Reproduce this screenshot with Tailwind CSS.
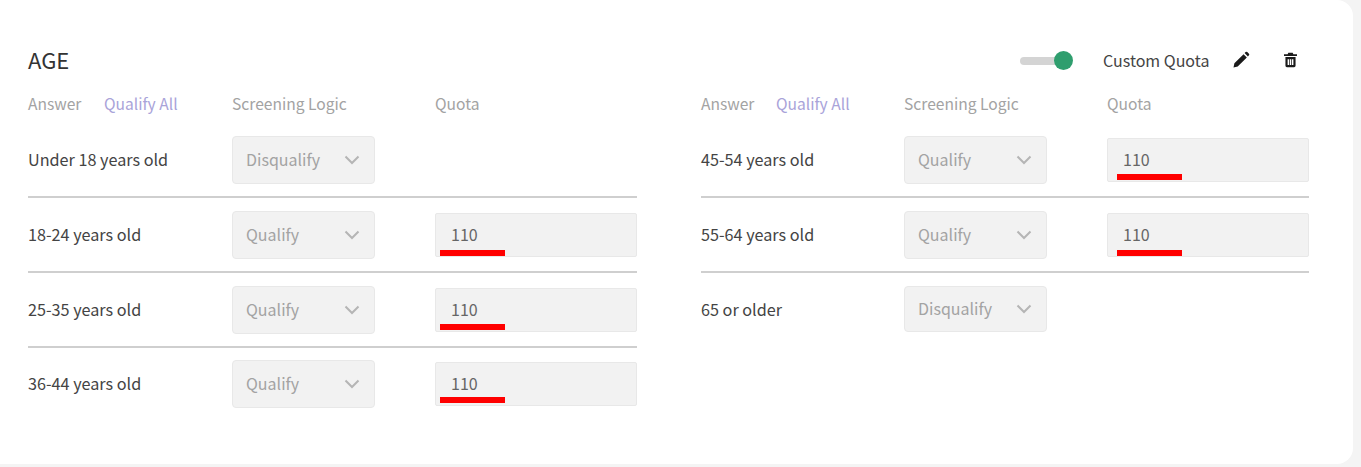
<!DOCTYPE html>
<html lang="en">

<head>
    <meta charset="UTF-8">
    <meta name="viewport" content="width=device-width, initial-scale=1.0">
    <script src="https://cdn.jsdelivr.net/npm/@tailwindcss/browser@4"></script>
    <title>Age quota</title>
</head>

<body class="bg-[#f4f4f4] font-['Noto_Sans_CJK_SC',sans-serif] overflow-hidden">
    <div class="bg-white w-[1353px] h-[464px] rounded-br-[16px] rounded-tr-[16px] pl-[28px] pr-[44px] pt-[47px]">
        <!-- Header -->
        <div class="flex items-center h-[28px]">
            <h2 class="text-[22px] text-[#333] leading-[28px] mb-[4px]">AGE</h2>
            <div class="ml-auto flex items-center">
                <div class="relative w-[50px] h-[8px] rounded-full bg-[#d4d4d4]">
                    <span class="absolute right-[-3px] top-[-6px] w-[19px] h-[19px] rounded-full bg-[#2f9e6e]"></span>
                </div>
                <span class="ml-[33px] mb-[3px] text-[16px] leading-[20px] text-[#444] w-[107px] whitespace-nowrap">Custom Quota</span>
                <svg class="ml-[22px] mb-[3px] w-[18px] h-[18px]" viewBox="0 0 24 24" fill="#1a1a1a"><path d="M2 22l1.2-5.6L15.4 4.2l4.4 4.4L7.6 20.8 2 22zM16.8 2.8l1.4-1.4a1.5 1.5 0 0 1 2.1 0l2.3 2.3a1.5 1.5 0 0 1 0 2.1l-1.4 1.4-4.4-4.4z"/></svg>
                <svg class="ml-[34px] mb-[3px] w-[13px] h-[16px]" viewBox="3 2 18 20" fill="#1a1a1a"><path d="M9 2h6l1 2h5v2.5H3V4h5l1-2zM5 8h14v12a2 2 0 0 1-2 2H7a2 2 0 0 1-2-2V8zm3 3v8h2v-8H8zm3 0v8h2v-8h-2zm3 0v8h2v-8h-2z"/></svg>
                <span class="w-[12px]"></span>
            </div>
        </div>

        <div class="grid grid-cols-[609px_608px] gap-x-[64px] mt-[19px]">
            <!-- Left column -->
            <div>
                <div class="flex items-center h-[20px] text-[15.6px] text-[#a3a3a3]">
                    <span class="w-[76px]">Answer</span>
                    <span class="w-[128px] text-[#a9a3d9]">Qualify All</span>
                    <span class="w-[203px]">Screening Logic</span>
                    <span>Quota</span>
                </div>
                <div class="mt-[9px]">
                    <div class="flex items-center h-[75px] border-b-2 border-[#cfcfcf]">
                        <span class="w-[204px] text-[16.2px] text-[#444]">Under 18 years old</span>
                        <div class="w-[143px] h-[48px] bg-[#f2f2f2] border border-[#e8e8e8] rounded-[4px] flex items-center justify-between pl-[13px] pr-[14px] text-[16px] text-[#a3a3a3]"><span class="mb-[2px]">Disqualify</span><svg class="w-[16px] h-[10px]" viewBox="0 0 16 10" fill="none" stroke="#b5b5b5" stroke-width="2"><path d="M1.5 1.5 8 8l6.5-6.5"/></svg></div>
                    </div>
                    <div class="flex items-center h-[75px] border-b-2 border-[#cfcfcf]">
                        <span class="w-[204px] text-[16.2px] text-[#444]">18-24 years old</span>
                        <div class="w-[143px] h-[48px] bg-[#f2f2f2] border border-[#e8e8e8] rounded-[4px] flex items-center justify-between pl-[13px] pr-[14px] text-[16px] text-[#a3a3a3]"><span class="mb-[2px]">Qualify</span><svg class="w-[16px] h-[10px]" viewBox="0 0 16 10" fill="none" stroke="#b5b5b5" stroke-width="2"><path d="M1.5 1.5 8 8l6.5-6.5"/></svg></div>
                        <div class="relative ml-[60px] w-[202px] h-[44px] bg-[#f2f2f2] border border-[#e8e8e8] rounded-[2px] flex items-center pl-[15px] text-[16px] text-[#666]"><span class="mb-[2px]">110</span><span class="absolute left-[4px] top-[36px] w-[65px] h-[6px] bg-[#ff0000]"></span></div>
                    </div>
                    <div class="flex items-center h-[75px] border-b-2 border-[#cfcfcf]">
                        <span class="w-[204px] text-[16.2px] text-[#444]">25-35 years old</span>
                        <div class="w-[143px] h-[48px] bg-[#f2f2f2] border border-[#e8e8e8] rounded-[4px] flex items-center justify-between pl-[13px] pr-[14px] text-[16px] text-[#a3a3a3]"><span class="mb-[2px]">Qualify</span><svg class="w-[16px] h-[10px]" viewBox="0 0 16 10" fill="none" stroke="#b5b5b5" stroke-width="2"><path d="M1.5 1.5 8 8l6.5-6.5"/></svg></div>
                        <div class="relative ml-[60px] w-[202px] h-[44px] bg-[#f2f2f2] border border-[#e8e8e8] rounded-[2px] flex items-center pl-[15px] text-[16px] text-[#666]"><span class="mb-[2px]">110</span><span class="absolute left-[4px] top-[35px] w-[65px] h-[6px] bg-[#ff0000]"></span></div>
                    </div>
                    <div class="flex items-center h-[72px]">
                        <span class="w-[204px] mb-[2px] text-[16.2px] text-[#444]">36-44 years old</span>
                        <div class="w-[143px] h-[48px] bg-[#f2f2f2] border border-[#e8e8e8] rounded-[4px] flex items-center justify-between pl-[13px] pr-[14px] text-[16px] text-[#a3a3a3]"><span class="mb-[2px]">Qualify</span><svg class="w-[16px] h-[10px]" viewBox="0 0 16 10" fill="none" stroke="#b5b5b5" stroke-width="2"><path d="M1.5 1.5 8 8l6.5-6.5"/></svg></div>
                        <div class="relative ml-[60px] w-[202px] h-[44px] bg-[#f2f2f2] border border-[#e8e8e8] rounded-[2px] flex items-center pl-[15px] text-[16px] text-[#666]"><span class="mb-[2px]">110</span><span class="absolute left-[4px] top-[34px] w-[65px] h-[6px] bg-[#ff0000]"></span></div>
                    </div>
                </div>
            </div>

            <!-- Right column -->
            <div>
                <div class="flex items-center h-[20px] text-[15.6px] text-[#a3a3a3]">
                    <span class="w-[75px]">Answer</span>
                    <span class="w-[128px] text-[#a9a3d9]">Qualify All</span>
                    <span class="w-[203px]">Screening Logic</span>
                    <span>Quota</span>
                </div>
                <div class="mt-[9px]">
                    <div class="flex items-center h-[75px] border-b-2 border-[#cfcfcf]">
                        <span class="w-[203px] text-[16.2px] text-[#444]">45-54 years old</span>
                        <div class="w-[143px] h-[48px] bg-[#f2f2f2] border border-[#e8e8e8] rounded-[4px] flex items-center justify-between pl-[13px] pr-[14px] text-[16px] text-[#a3a3a3]"><span class="mb-[2px]">Qualify</span><svg class="w-[16px] h-[10px]" viewBox="0 0 16 10" fill="none" stroke="#b5b5b5" stroke-width="2"><path d="M1.5 1.5 8 8l6.5-6.5"/></svg></div>
                        <div class="relative ml-[60px] w-[202px] h-[44px] bg-[#f2f2f2] border border-[#e8e8e8] rounded-[2px] flex items-center pl-[15px] text-[16px] text-[#666]"><span class="mb-[2px]">110</span><span class="absolute left-[9px] top-[35px] w-[65px] h-[6px] bg-[#ff0000]"></span></div>
                    </div>
                    <div class="flex items-center h-[75px] border-b-2 border-[#cfcfcf]">
                        <span class="w-[203px] text-[16.2px] text-[#444]">55-64 years old</span>
                        <div class="w-[143px] h-[48px] bg-[#f2f2f2] border border-[#e8e8e8] rounded-[4px] flex items-center justify-between pl-[13px] pr-[14px] text-[16px] text-[#a3a3a3]"><span class="mb-[2px]">Qualify</span><svg class="w-[16px] h-[10px]" viewBox="0 0 16 10" fill="none" stroke="#b5b5b5" stroke-width="2"><path d="M1.5 1.5 8 8l6.5-6.5"/></svg></div>
                        <div class="relative ml-[60px] w-[202px] h-[44px] bg-[#f2f2f2] border border-[#e8e8e8] rounded-[2px] flex items-center pl-[15px] text-[16px] text-[#666]"><span class="mb-[2px]">110</span><span class="absolute left-[9px] top-[36px] w-[65px] h-[6px] bg-[#ff0000]"></span></div>
                    </div>
                    <div class="flex items-center h-[72px]">
                        <span class="w-[203px] text-[16.2px] text-[#444]">65 or older</span>
                        <div class="w-[143px] h-[46px] bg-[#f2f2f2] border border-[#e8e8e8] rounded-[4px] flex items-center justify-between pl-[13px] pr-[14px] text-[16px] text-[#a3a3a3]"><span class="mb-[2px]">Disqualify</span><svg class="w-[16px] h-[10px]" viewBox="0 0 16 10" fill="none" stroke="#b5b5b5" stroke-width="2"><path d="M1.5 1.5 8 8l6.5-6.5"/></svg></div>
                    </div>
                </div>
            </div>
        </div>
    </div>
</body>

</html>
